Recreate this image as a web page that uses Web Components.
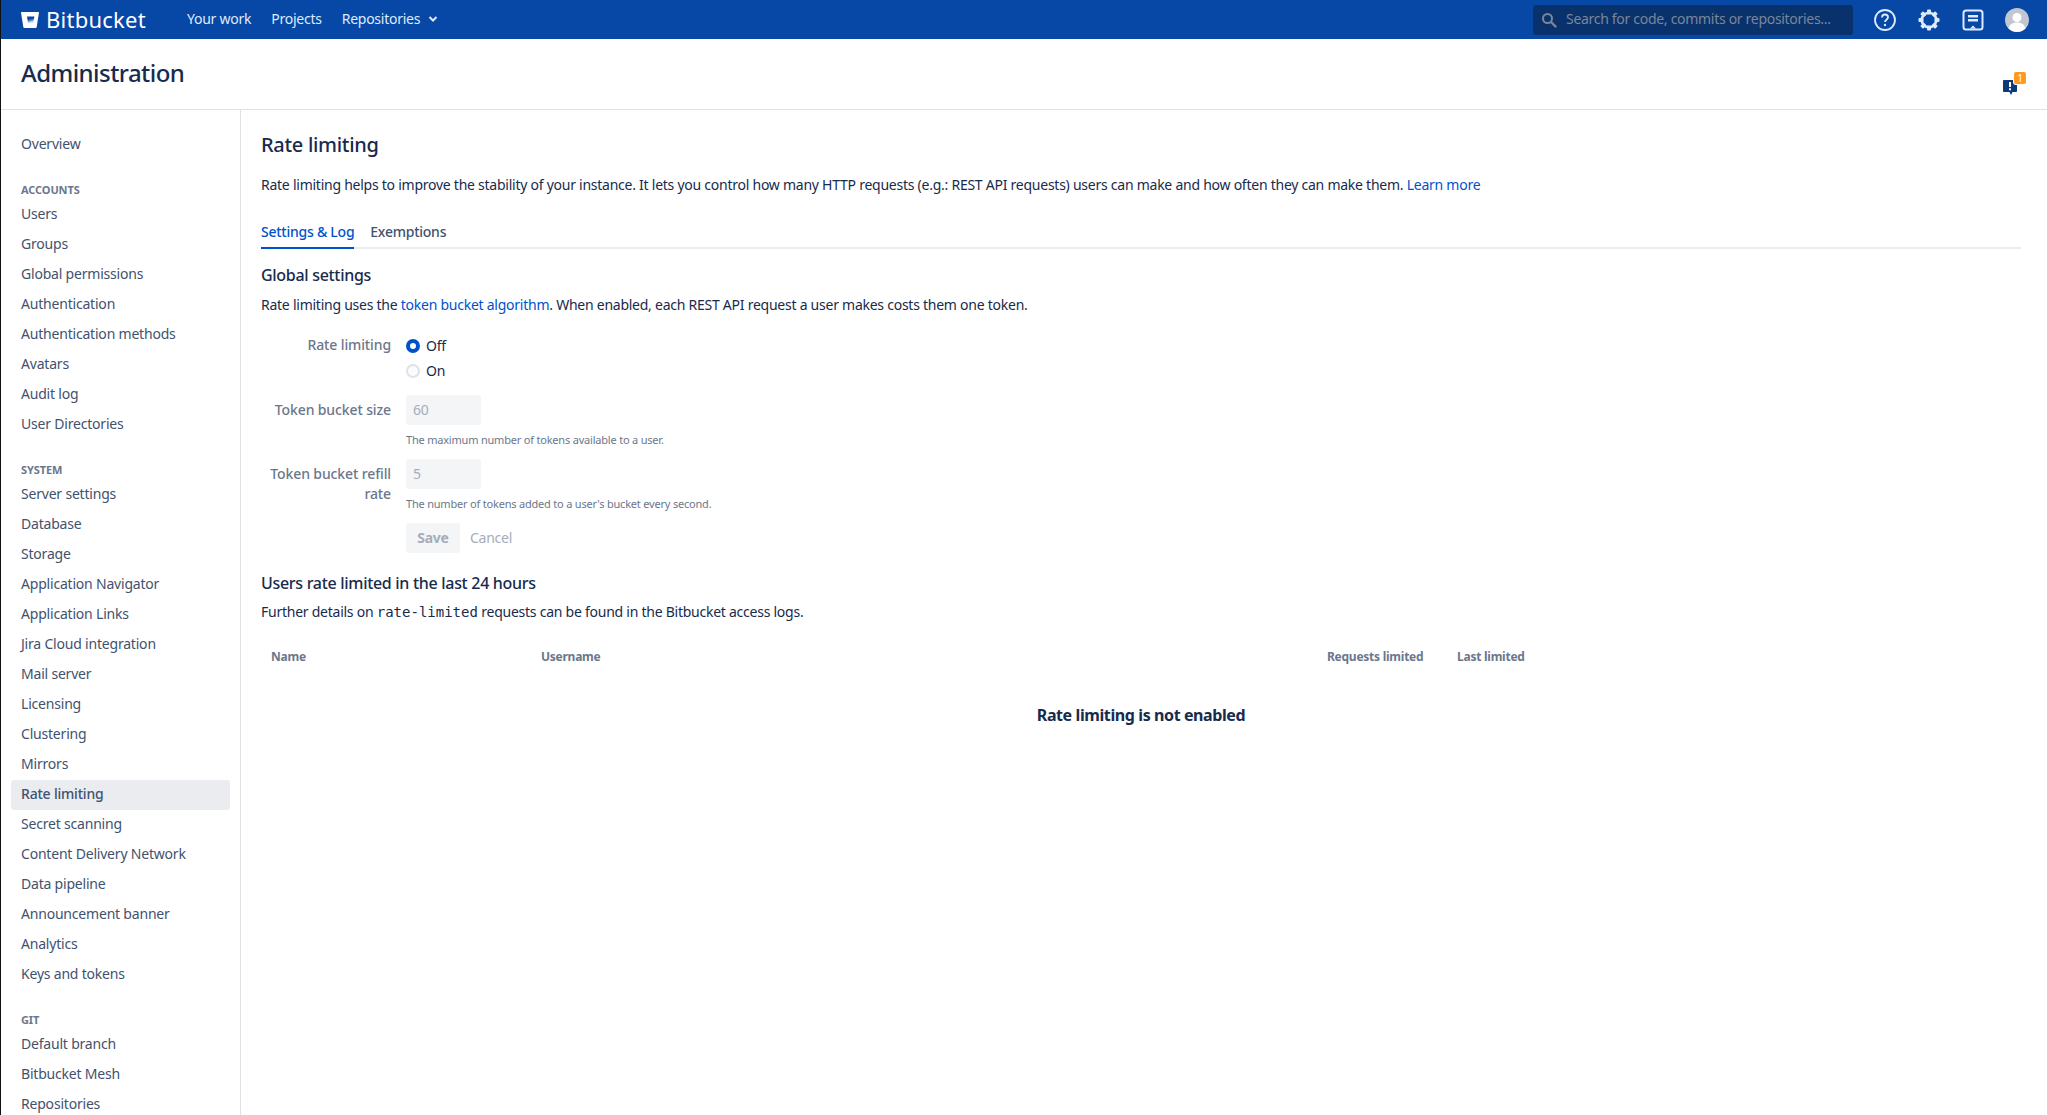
<!DOCTYPE html>
<html lang="en">
<head>
<meta charset="utf-8">
<title>Rate limiting - Bitbucket</title>
<style>
  html, body { margin: 0; height: 100%; overflow: hidden; background: #fff; }
  body {
    font-family: 'Noto Sans', 'Open Sans', sans-serif;
    font-size: 14px;
    line-height: 20px;
    letter-spacing: -0.25px;
    color: #172B4D;
    border-left: 1px solid #111;
    box-sizing: border-box;
  }
</style>
</head>
<body>
<bb-app>
  <bb-topbar slot="top"></bb-topbar>
  <bb-page-title slot="title">Administration</bb-page-title>
  <bb-sidebar slot="side">
    <bb-nav-group>
      <bb-nav-item>Overview</bb-nav-item>
    </bb-nav-group>
    <bb-nav-group title="ACCOUNTS">
      <bb-nav-item>Users</bb-nav-item>
      <bb-nav-item>Groups</bb-nav-item>
      <bb-nav-item>Global permissions</bb-nav-item>
      <bb-nav-item>Authentication</bb-nav-item>
      <bb-nav-item>Authentication methods</bb-nav-item>
      <bb-nav-item>Avatars</bb-nav-item>
      <bb-nav-item>Audit log</bb-nav-item>
      <bb-nav-item>User Directories</bb-nav-item>
    </bb-nav-group>
    <bb-nav-group title="SYSTEM">
      <bb-nav-item>Server settings</bb-nav-item>
      <bb-nav-item>Database</bb-nav-item>
      <bb-nav-item>Storage</bb-nav-item>
      <bb-nav-item>Application Navigator</bb-nav-item>
      <bb-nav-item>Application Links</bb-nav-item>
      <bb-nav-item>Jira Cloud integration</bb-nav-item>
      <bb-nav-item>Mail server</bb-nav-item>
      <bb-nav-item>Licensing</bb-nav-item>
      <bb-nav-item>Clustering</bb-nav-item>
      <bb-nav-item>Mirrors</bb-nav-item>
      <bb-nav-item active>Rate limiting</bb-nav-item>
      <bb-nav-item>Secret scanning</bb-nav-item>
      <bb-nav-item>Content Delivery Network</bb-nav-item>
      <bb-nav-item>Data pipeline</bb-nav-item>
      <bb-nav-item>Announcement banner</bb-nav-item>
      <bb-nav-item>Analytics</bb-nav-item>
      <bb-nav-item>Keys and tokens</bb-nav-item>
    </bb-nav-group>
    <bb-nav-group title="GIT">
      <bb-nav-item>Default branch</bb-nav-item>
      <bb-nav-item>Bitbucket Mesh</bb-nav-item>
      <bb-nav-item>Repositories</bb-nav-item>
    </bb-nav-group>
  </bb-sidebar>
  <bb-rate-limiting slot="main"></bb-rate-limiting>
</bb-app>

<script>
class BbApp extends HTMLElement {
  connectedCallback() {
    this.attachShadow({ mode: 'open' });
    this.shadowRoot.innerHTML = `
      <style>
        :host { display: flex; flex-direction: column; height: 100vh; }
        .body { display: flex; flex: 1; min-height: 0; }
        .side { flex: 0 0 239px; width: 239px; border-right: 1px solid #DFE1E6; overflow: hidden; }
        .main { flex: 1; min-width: 0; }
      </style>
      <slot name="top"></slot>
      <slot name="title"></slot>
      <div class="body">
        <div class="side"><slot name="side"></slot></div>
        <div class="main"><slot name="main"></slot></div>
      </div>
    `;
  }
}

class BbTopbar extends HTMLElement {
  connectedCallback() {
    const teeth = [0, 45, 90, 135, 180, 225, 270, 315]
      .map(deg => `<rect x="10" y="1.500" width="4" height="5" rx="1" transform="rotate(${deg} 12 12)"/>`)
      .join('');

    this.attachShadow({ mode: 'open' });
    this.shadowRoot.innerHTML = `
      <style>
        :host { display: flex; align-items: center; height: 39px; background: #0747A6; color: #DEEBFF; padding: 0 18px 0 20px; }
        .logo { display: flex; align-items: center; gap: 7px; color: #fff; font-size: 22px; letter-spacing: 0.25px; width: 166px; }
        .logo svg { display: block; }
        .logo span { margin-bottom: 2px; }
        nav { display: flex; align-items: center; gap: 20px; flex: 1; padding-bottom: 2px; }
        nav span { display: flex; align-items: center; gap: 8px; }
        .search { display: flex; align-items: center; gap: 9px; box-sizing: border-box; width: 320px; height: 30px; padding: 0 8px; background: #09326C; border-radius: 3px; color: #7A869A; margin-right: 20px; letter-spacing: -0.3px; }
        .search span { margin-bottom: 2px; }
        .icons { display: flex; align-items: center; gap: 20px; }
        .icons svg { display: block; }
      </style>
      <div class="logo">
        <svg width="18" height="16" viewBox="0 0 18 16">
          <defs><linearGradient id="mark" x1="0" y1="0" x2="0.3" y2="1"><stop offset="0.45" stop-color="#0747A6"/><stop offset="1" stop-color="#DEEBFF"/></linearGradient></defs>
          <path fill="#fff" d="M.6 0h16.800c.4 0 .6.3.6.6l-2.300 14.500c-.1.5-.4.9-1 .9H3.300c-.5 0-.9-.4-1-.9L0 .6C0 .3.2 0 .6 0z"/>
          <path fill="url(#mark)" d="M6 4.500h7.400L12.300 11H7z"/>
        </svg>
        <span>Bitbucket</span>
      </div>
      <nav>
        <span>Your work</span>
        <span>Projects</span>
        <span>Repositories
          <svg width="10" height="8" viewBox="0 0 10 8"><path d="M1.500 2l3.500 3.500L8.500 2" fill="none" stroke="#DEEBFF" stroke-width="2"/></svg>
        </span>
      </nav>
      <div class="search">
        <svg width="16" height="16" viewBox="0 0 16 16"><circle cx="6.500" cy="6.500" r="4.500" fill="none" stroke="#7A869A" stroke-width="2"/><path d="M10 10l4.500 4.500" stroke="#7A869A" stroke-width="2.400" stroke-linecap="round"/></svg>
        <span>Search for code, commits or repositories...</span>
      </div>
      <div class="icons">
        <svg width="24" height="24" viewBox="0 0 24 24"><circle cx="12" cy="12" r="10" fill="none" stroke="#DEEBFF" stroke-width="1.800"/><path d="M9 9.500c0-1.800 1.300-3 3-3s3 1.200 3 2.800c0 2.400-3 2.400-3 4.700" fill="none" stroke="#DEEBFF" stroke-width="1.800"/><circle cx="12" cy="17" r="1.200" fill="#DEEBFF"/></svg>
        <svg width="24" height="24" viewBox="0 0 24 24">
          <circle cx="12" cy="12" r="7.300" fill="none" stroke="#DEEBFF" stroke-width="2.600"/>
          <g fill="#DEEBFF">${teeth}</g>
        </svg>
        <svg width="24" height="24" viewBox="0 0 24 24"><rect x="2.500" y="2.500" width="19" height="19" rx="2.500" fill="#0747A6" stroke="#DEEBFF" stroke-width="2"/><path fill="#DEEBFF" d="M7 7h10v2.500H7zM7 11h10v2.500H7zM9 20.500l3-3 3 3z"/></svg>
        <svg width="24" height="24" viewBox="0 0 24 24"><circle cx="12" cy="12" r="12" fill="#C1C7D0"/><circle cx="12" cy="9.500" r="4.500" fill="#fff"/><path fill="#fff" d="M3.500 20.500c1-4 4-6 8.500-6s7.500 2 8.500 6A12 12 0 0 1 12 24a12 12 0 0 1-8.500-3.500z"/></svg>
      </div>
    `;
  }
}

class BbPageTitle extends HTMLElement {
  connectedCallback() {
    this.attachShadow({ mode: 'open' });
    this.shadowRoot.innerHTML = `
      <style>
        :host { display: flex; justify-content: space-between; box-sizing: border-box; height: 71px; padding: 0 21px 0 20px; border-bottom: 1px solid #DFE1E6; }
        h1 { margin: 20px 0 0; font-size: 24px; line-height: 28px; font-weight: 500; color: #172B4D; letter-spacing: -0.55px; }
        .notice { position: relative; width: 24px; height: 24px; margin-top: 33px; }
        .badge { position: absolute; top: 0; right: 0; width: 12px; height: 12px; border-radius: 2px; background: #FF991F; color: #FFF; font-size: 10px; letter-spacing: 0; line-height: 12px; text-align: center; box-shadow: 0 0 0 1px #fff; }
        svg { position: absolute; left: 1px; bottom: 1px; display: block; }
      </style>
      <h1><slot></slot></h1>
      <div class="notice">
        <svg width="14" height="15" viewBox="0 0 14 15"><path fill="#0A3A78" d="M1 0h12c.5 0 1 .5 1 1v10c0 .5-.5 1-1 1H9.500L8 15l-1.500-3H1c-.5 0-1-.5-1-1V1c0-.5.5-1 1-1z"/><path fill="#fff" d="M6 2h2v5H6zM6 8.200h2v2H6z"/></svg>
        <div class="badge">1</div>
      </div>
    `;
  }
}

class BbSidebar extends HTMLElement {
  connectedCallback() {
    this.attachShadow({ mode: 'open' });
    this.shadowRoot.innerHTML = `
      <style>
        :host { display: block; padding: 20px 10px 0 10px; }
      </style>
      <slot></slot>
    `;
  }
}

class BbNavGroup extends HTMLElement {
  connectedCallback() {
    const title = this.getAttribute('title');
    this.removeAttribute('title');
    this.attachShadow({ mode: 'open' });
    this.shadowRoot.innerHTML = `
      <style>
        :host { display: block; margin-bottom: 20px; }
        h4 { margin: 0; padding: 0 10px; height: 20px; font-size: 11px; line-height: 19px; font-weight: 700; letter-spacing: -0.1px; color: #6B778C; display: ${title ? 'block' : 'none'}; }
      </style>
      <h4>${title || ''}</h4>
      <slot></slot>
    `;
  }
}

class BbNavItem extends HTMLElement {
  connectedCallback() {
    this.attachShadow({ mode: 'open' });
    this.shadowRoot.innerHTML = `
      <style>
        :host { display: block; height: 30px; line-height: 28px; padding: 0 10px; border-radius: 3px; color: #42526E; white-space: nowrap; letter-spacing: -0.2px; }
        :host([active]) { background: #EBECF0; font-weight: 500; }
      </style>
      <slot></slot>
    `;
  }
}

class BbTabs extends HTMLElement {
  connectedCallback() {
    this.attachShadow({ mode: 'open' });
    this.shadowRoot.innerHTML = `
      <style>
        :host { display: flex; gap: 16px; height: 32px; box-shadow: inset 0 -2px 0 #EBECF0; font-weight: 500; color: #42526E; }
        span { line-height: 29px; height: 32px; box-sizing: border-box; }
        .on { color: #0052CC; border-bottom: 2px solid #0052CC; }
      </style>
      <span class="on">Settings &amp; Log</span>
      <span>Exemptions</span>
    `;
  }
}

class BbField extends HTMLElement {
  connectedCallback() {
    this.attachShadow({ mode: 'open' });
    this.shadowRoot.innerHTML = `
      <style>
        :host { display: grid; grid-template-columns: 130px 1fr; column-gap: 15px; }
        label { text-align: right; color: #6B778C; font-weight: 500; padding-top: 5px; letter-spacing: -0.12px; }
        :host(.radios) label { padding-top: 2px; }
      </style>
      <label>${this.getAttribute('label') || ''}</label>
      <div><slot></slot><slot name="hint"></slot></div>
    `;
  }
}

class BbRadio extends HTMLElement {
  connectedCallback() {
    this.attachShadow({ mode: 'open' });
    this.shadowRoot.innerHTML = `
      <style>
        :host { display: flex; align-items: center; gap: 6px; height: 25px; }
        i { box-sizing: border-box; width: 14px; height: 14px; border-radius: 50%; background: #FAFBFC; border: 2px solid #DFE1E6; }
        :host([checked]) i { background: #fff; border: 4px solid #0052CC; }
      </style>
      <i></i><slot></slot>
    `;
  }
}

class BbInput extends HTMLElement {
  connectedCallback() {
    this.attachShadow({ mode: 'open' });
    this.shadowRoot.innerHTML = `
      <style>
        :host { display: block; box-sizing: border-box; width: 75px; height: 30px; padding: 0 7px; line-height: 30px; background: #F4F5F7; border-radius: 3px; color: #A5ADBA; }
      </style>
      <slot></slot>
    `;
  }
}

class BbUsersTable extends HTMLElement {
  connectedCallback() {
    this.attachShadow({ mode: 'open' });
    this.shadowRoot.innerHTML = `
      <style>
        :host { display: block; }
        .head { display: grid; grid-template-columns: 270px 786px 130px 1fr; font-size: 12px; font-weight: 700; color: #6B778C; line-height: 20px; letter-spacing: -0.25px; }
        .head span { padding-left: 10px; }
        .empty { margin-top: 36px; text-align: center; font-size: 16px; line-height: 24px; font-weight: 700; letter-spacing: -0.4px; color: #172B4D; }
      </style>
      <div class="head"><span>Name</span><span>Username</span><span>Requests limited</span><span>Last limited</span></div>
      <div class="empty"><slot></slot></div>
    `;
  }
}

class BbRateLimiting extends HTMLElement {
  connectedCallback() {
    this.attachShadow({ mode: 'open' });
    this.shadowRoot.innerHTML = `
      <style>
        :host { display: block; padding: 21px 26px 0 20px; }
        h2 { margin: 0 0 16px; font-size: 20px; line-height: 28px; font-weight: 500; letter-spacing: -0.3px; }
        h3 { margin: 0 0 10px; font-size: 16px; line-height: 20px; font-weight: 500; letter-spacing: -0.3px; }
        h3.users { margin-bottom: 9px; }
        p { margin: 0; }
        a { color: #0052CC; text-decoration: none; }
        code { font-family: 'DejaVu Sans Mono', 'Liberation Mono', monospace; font-size: 14px; letter-spacing: 0; }
        bb-tabs { margin: 22px 0 16px; }
        .form { margin-top: 18px; }
        .radios { margin-bottom: 12px; }
        bb-field + bb-field { margin-top: 9px; }
        .hint { font-size: 11px; letter-spacing: -0.2px; color: #6B778C; line-height: 20px; margin-top: 5px; }
        .actions { display: flex; align-items: center; gap: 10px; margin: 9px 0 20px 145px; }
        .save { height: 30px; width: 54px; line-height: 30px; text-align: center; background: #F4F5F7; border-radius: 3px; color: #A5ADBA; font-weight: 700; }
        .cancel { color: #A5ADBA; }
        bb-users-table { margin-top: 25px; }
      </style>
      <h2>Rate limiting</h2>
      <p>Rate limiting helps to improve the stability of your instance. It lets you control how many HTTP requests (e.g.: REST API requests) users can make and how often they can make them. <a>Learn more</a></p>
      <bb-tabs></bb-tabs>
      <h3>Global settings</h3>
      <p>Rate limiting uses the <a>token bucket algorithm</a>. When enabled, each REST API request a user makes costs them one token.</p>
      <div class="form">
        <bb-field label="Rate limiting" class="radios">
          <bb-radio checked>Off</bb-radio>
          <bb-radio>On</bb-radio>
        </bb-field>
        <bb-field label="Token bucket size">
          <bb-input>60</bb-input>
          <div class="hint" slot="hint">The maximum number of tokens available to a user.</div>
        </bb-field>
        <bb-field label="Token bucket refill rate">
          <bb-input>5</bb-input>
          <div class="hint" slot="hint">The number of tokens added to a user's bucket every second.</div>
        </bb-field>
        <div class="actions"><span class="save">Save</span><span class="cancel">Cancel</span></div>
      </div>
      <h3 class="users">Users rate limited in the last 24 hours</h3>
      <p>Further details on <code>rate-limited</code> requests can be found in the Bitbucket access logs.</p>
      <bb-users-table>Rate limiting is not enabled</bb-users-table>
    `;
  }
}

customElements.define('bb-app', BbApp);
customElements.define('bb-topbar', BbTopbar);
customElements.define('bb-page-title', BbPageTitle);
customElements.define('bb-sidebar', BbSidebar);
customElements.define('bb-nav-group', BbNavGroup);
customElements.define('bb-nav-item', BbNavItem);
customElements.define('bb-tabs', BbTabs);
customElements.define('bb-field', BbField);
customElements.define('bb-radio', BbRadio);
customElements.define('bb-input', BbInput);
customElements.define('bb-users-table', BbUsersTable);
customElements.define('bb-rate-limiting', BbRateLimiting);
</script>
</body>
</html>
